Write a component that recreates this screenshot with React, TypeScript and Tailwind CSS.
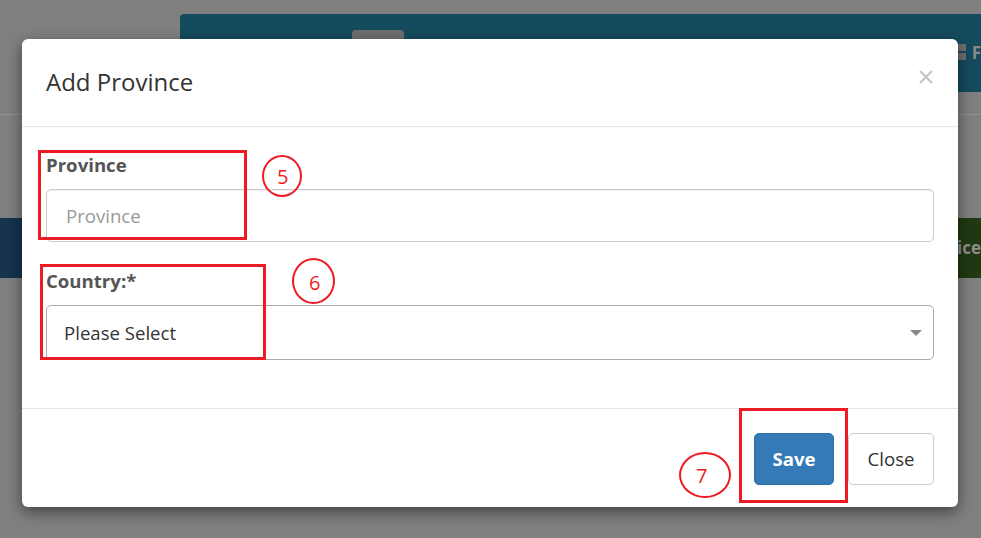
const font = { fontFamily: '"Open Sans", "Liberation Sans", sans-serif' }

function Mark({ className, label, numClass }: { className: string; label: string; numClass: string }) {
  return (
    <div className={`absolute rounded-[50%] border-2 border-[#ed1c24] ${className}`}>
      <span className={`absolute text-[20px] leading-none text-[#ed1c24] ${numClass}`}>{label}</span>
    </div>
  )
}

export default function App() {
  return (
    <div className="relative h-[538px] w-[981px] overflow-hidden bg-[#808080]" style={font}>
      {/* page behind the backdrop */}
      <div className="flex flex-col">
        <div className="h-[14px]" />
        <div className="ml-[180px] flex h-[78px] rounded-tl-[4px] bg-[#154b5e]">
          <div className="ml-[172px] mt-[16px] h-[30px] w-[52px] rounded-[4px] bg-[#6f6f6f]" />
          <div className="ml-auto mt-[30px] flex gap-[6px]">
            <div className="grid h-[16px] w-[8px] grid-cols-1 gap-[2px]">
              <div className="bg-[#6f6f6f]" />
              <div className="bg-[#6f6f6f]" />
            </div>
            <span className="text-[17px] font-bold leading-[18px] text-[#8a8a8a]">F</span>
          </div>
        </div>
        <div className="h-[23px] border-b border-[#929292] bg-[#808080]" />
        <div className="h-[103px]" />
        <div className="flex h-[60px] justify-between">
          <div className="w-[40px] bg-[#16344e]" />
          <div className="flex w-[60px] items-center justify-end bg-[#1f3a12]">
            <span className="text-[17px] font-bold text-[#8f8f8f]">vice</span>
          </div>
        </div>
      </div>

      {/* modal */}
      <div className="absolute inset-0 px-[22px] pt-[39px]">
        <div className="relative w-[936px] rounded-[6px] bg-white shadow-[0_5px_15px_rgba(0,0,0,0.5)]">
          <div className="flex h-[88px] items-center justify-between border-b border-[#e5e5e5] pb-[2px] pl-[24px] pr-[25px]">
            <h4 className="text-[24px] leading-[34px] text-[#333333]">Add Province</h4>
            <svg width="14" height="14" viewBox="0 0 14 14" className="mb-[10px]">
              <path d="M1 1L13 13M13 1L1 13" stroke="#c8c8c8" strokeWidth="2.4" />
            </svg>
          </div>

          <div className="px-[24px] pb-[48px] pt-[25px]">
            <label className="block text-[18.6px] font-bold leading-[26px] text-[#555555]">Province</label>
            <div className="mt-[11px] flex h-[53px] items-center rounded-[5px] border border-[#cccccc] px-[19px] shadow-[inset_0_1px_1px_rgba(0,0,0,0.075)]">
              <span className="text-[18.6px] text-[#999999]">Province</span>
            </div>
            <label className="mt-[26px] block text-[18.6px] font-bold leading-[26px] text-[#555555]">Country:*</label>
            <div className="mt-[11px] flex h-[55px] items-center justify-between rounded-[5px] border border-[#aaaaaa] pl-[17px] pr-[11px]">
              <span className="text-[18.6px] text-[#333333]">Please Select</span>
              <svg width="12" height="6" viewBox="0 0 12 6">
                <path d="M0 0h12L6 6z" fill="#888888" />
              </svg>
            </div>
          </div>

          <div className="flex h-[99px] items-start justify-end gap-[14px] border-t border-[#e5e5e5] pr-[24px] pt-[24px]">
            <button className="h-[52px] w-[80px] rounded-[5px] border border-[#2e6da4] bg-[#337ab7] text-[18.6px] font-bold text-white">
              Save
            </button>
            <button className="h-[52px] w-[86px] rounded-[5px] border border-[#cccccc] bg-white text-[18.6px] text-[#333333]">
              Close
            </button>
          </div>

          {/* annotations */}
          <div className="absolute left-[16px] top-[111px] h-[90px] w-[209px] border-[3px] border-[#ed1c24]" />
          <div className="absolute left-[18px] top-[225px] h-[96px] w-[226px] border-[3px] border-[#ed1c24]" />
          <div className="absolute left-[717px] top-[369px] h-[95px] w-[109px] border-[3px] border-[#ed1c24]" />
          <Mark className="left-[240px] top-[116px] h-[42px] w-[40px]" label="5" numClass="left-[13px] top-[10px]" />
          <Mark className="left-[270px] top-[219px] h-[46px] w-[43px]" label="6" numClass="left-[15px] top-[13px]" />
          <Mark className="left-[657px] top-[413px] h-[46px] w-[52px]" label="7" numClass="left-[15px] top-[12px]" />
        </div>
      </div>
    </div>
  )
}
